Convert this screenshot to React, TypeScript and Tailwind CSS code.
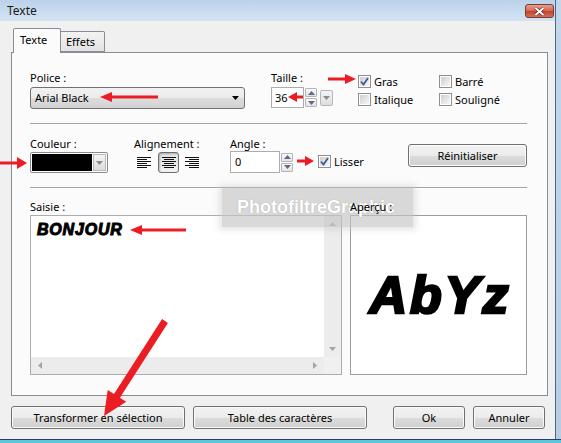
import React from "react";

type Pt = [number, number];

// red annotation arrows, screen coords: tail -> tip
const ARROWS: { tail: Pt; tip: Pt; w: number; len: number; half: number }[] = [
  { tail: [158, 97], tip: [100, 97], w: 3, len: 12, half: 5 },
  { tail: [303, 97], tip: [288, 97], w: 3, len: 9, half: 5 },
  { tail: [328, 79], tip: [356, 79], w: 3, len: 11, half: 5 },
  { tail: [0, 163], tip: [27, 163], w: 3, len: 10, half: 6 },
  { tail: [297, 161], tip: [314, 161], w: 3, len: 9, half: 5 },
  { tail: [186, 230], tip: [130, 230], w: 3, len: 12, half: 5 },
  { tail: [165, 321], tip: [104, 416], w: 7, len: 24, half: 11 },
];

function arrowPoints(tail: Pt, tip: Pt, w: number, len: number, half: number) {
  const dx = tip[0] - tail[0];
  const dy = tip[1] - tail[1];
  const l = Math.hypot(dx, dy);
  const ux = dx / l;
  const uy = dy / l;
  const nx = -uy;
  const ny = ux;
  const bx = tip[0] - ux * len;
  const by = tip[1] - uy * len;
  const pts: Pt[] = [
    [tail[0] + (nx * w) / 2, tail[1] + (ny * w) / 2],
    [bx + (nx * w) / 2, by + (ny * w) / 2],
    [bx + nx * half, by + ny * half],
    tip,
    [bx - nx * half, by - ny * half],
    [bx - (nx * w) / 2, by - (ny * w) / 2],
    [tail[0] - (nx * w) / 2, tail[1] - (ny * w) / 2],
  ];
  return pts.map((p) => p.map((v) => v.toFixed(1)).join(",")).join(" ");
}

const BTN =
  "h-[23px] rounded-[3px] border border-[#707070] bg-[linear-gradient(#f2f2f2_0%,#ebebeb_50%,#dddddd_50%,#cfcfcf_100%)] shadow-[inset_0_0_0_1px_#fbfbfb] flex items-center justify-center";

function Tri({ dir, color = "#4d4d4d" }: { dir: "up" | "down" | "left" | "right"; color?: string }) {
  const d = {
    up: "M0 4 L3.5 0 L7 4 Z",
    down: "M0 0 L7 0 L3.5 4 Z",
    left: "M4 0 L4 7 L0 3.5 Z",
    right: "M0 0 L4 3.5 L0 7 Z",
  }[dir];
  const vert = dir === "up" || dir === "down";
  return (
    <svg width={vert ? 7 : 4} height={vert ? 4 : 7} viewBox={vert ? "0 0 7 4" : "0 0 4 7"}>
      <path d={d} fill={color} />
    </svg>
  );
}

function Spin() {
  const half =
    "h-[9px] w-[12px] border border-[#b5b5b5] rounded-[1px] bg-[linear-gradient(#fafafa,#e4e4e4)] grid place-items-center";
  return (
    <div className="flex flex-col gap-px">
      <div className={half}>
        <Tri dir="up" color="#5b6b84" />
      </div>
      <div className={half}>
        <Tri dir="down" color="#5b6b84" />
      </div>
    </div>
  );
}

function Check({ checked, label }: { checked?: boolean; label: string }) {
  return (
    <div className="flex items-center gap-[3px] h-[13px]">
      <span className="w-[13px] h-[13px] border border-[#8e8f8f] p-px bg-white">
        <span className="w-full h-full grid place-items-center bg-[linear-gradient(135deg,#cfcfcf,#f7f7f7)]">
          {checked && (
            <svg width="9" height="9" viewBox="0 0 9 9">
              <path d="M1 4.5 L3.5 7.5 L8 1" stroke="#3d5a99" strokeWidth="1.8" fill="none" />
            </svg>
          )}
        </span>
      </span>
      <span>{label}</span>
    </div>
  );
}

function AlignIcon({ mode }: { mode: "left" | "center" | "right" }) {
  const widths = [14, 10, 14, 10, 14, 10];
  return (
    <svg width="14" height="11" viewBox="0 0 14 11">
      {widths.map((w, i) => {
        const x = mode === "left" ? 0 : mode === "center" ? (14 - w) / 2 : 14 - w;
        return <rect key={i} x={x} y={i * 2} width={w} height={1} fill="#111" />;
      })}
    </svg>
  );
}

function Sep() {
  return <div className="w-[497px] h-[2px] border-t border-[#a3a3a3] border-b border-b-white" />;
}

export default function App() {
  return (
    <div className="relative w-[561px] h-[443px] overflow-hidden flex flex-col font-['Noto_Sans',sans-serif] text-[11px] leading-[14px] text-black">
      <div className="flex flex-1">
        <div className="flex flex-col w-[555px]">
          {/* title bar */}
          <div className="h-[21px] flex items-start justify-between bg-[linear-gradient(#bcd2ea,#d3e3f4)]">
            <span className="pl-[7px] pt-[3px] text-[12px] leading-[16px] text-[#1a1a1a]">Texte</span>
            <div className="mt-[4px] mr-px w-[29px] h-[14px] rounded-[3px] border border-[#7a3b33] bg-[linear-gradient(#e6a191_0%,#d6634f_50%,#c2412c_51%,#d0705c_100%)] grid place-items-center">
              <svg width="11" height="9" viewBox="0 0 11 9">
                <path d="M1.5 1 L9.5 8 M9.5 1 L1.5 8" stroke="#5a1f18" strokeWidth="3.2" />
                <path d="M1.5 1 L9.5 8 M9.5 1 L1.5 8" stroke="#fff" strokeWidth="2" />
              </svg>
            </div>
          </div>

          {/* window body */}
          <div className="flex-1 bg-[#f0f0f0] pt-[7px] pl-[11px]">
            <div className="flex items-end ml-[2px]">
              <div className="relative z-10 -mb-px h-[25px] w-[48px] border border-b-0 border-[#898c95] rounded-t-[2px] bg-[#fbfbfb] pl-[6px] pt-[4px]">
                Texte
              </div>
              <div className="h-[21px] w-[44px] border border-l-0 border-[#898c95] rounded-tr-[2px] bg-[linear-gradient(#f3f3f3,#e3e3e3)] pl-[5px] pt-[3px]">
                Effets
              </div>
            </div>

            <div className="w-[537px] h-[344px] border border-[#898c95] bg-[#fbfbfb] pl-[18px] pt-[18px]">
              {/* font / size / style */}
              <div className="flex items-start">
                <div className="w-[215px]">
                  <div>Police :</div>
                  <div className="mt-[2px] h-[22px] rounded-[3px] border border-[#707070] bg-[linear-gradient(#f2f2f2_0%,#ebebeb_50%,#dddddd_50%,#d2d2d2_100%)] flex items-center justify-between pl-[4px] pr-[5px]">
                    <span>Arial Black</span>
                    <Tri dir="down" color="#000" />
                  </div>
                </div>
                <div className="ml-[26px]">
                  <div>Taille :</div>
                  <div className="mt-[2px] flex items-start">
                    <div className="w-[33px] h-[21px] border border-[#abadb3] bg-white pl-[3px] flex items-center">36</div>
                    <div className="ml-px mt-px">
                      <Spin />
                    </div>
                    <div className="ml-[3px] mt-[3px] w-[13px] h-[16px] border border-[#b8b8b8] rounded-[2px] bg-[linear-gradient(#f4f4f4,#dedede)] grid place-items-center">
                      <Tri dir="down" color="#8a8a8a" />
                    </div>
                  </div>
                </div>
                <div className="ml-[25px] mt-[4px] grid grid-cols-[81px_auto] gap-y-[5px]">
                  <Check checked label="Gras" />
                  <Check label="Barré" />
                  <Check label="Italique" />
                  <Check label="Souligné" />
                </div>
              </div>

              <div className="mt-[14px]">
                <Sep />
              </div>

              {/* colour / alignment / angle */}
              <div className="mt-[12px] flex items-start w-[497px]">
                <div className="w-[104px]">
                  <div>Couleur :</div>
                  <div className="mt-px w-[78px] h-[21px] border border-[#8a8a8a] rounded-[2px] bg-white p-px flex">
                    <div className="flex-1 bg-black" />
                    <div className="ml-px w-[13px] border border-[#b8b8b8] bg-[linear-gradient(#f4f4f4,#dcdcdc)] grid place-items-center">
                      <Tri dir="down" color="#8a8a8a" />
                    </div>
                  </div>
                </div>
                <div className="w-[96px]">
                  <div>Alignement :</div>
                  <div className="mt-px h-[21px] flex items-center">
                    <div className="ml-[3px]">
                      <AlignIcon mode="left" />
                    </div>
                    <div className="ml-[7px] w-[21px] h-[21px] rounded-[3px] border border-[#6f6f6f] bg-[linear-gradient(#e2e2e2,#f2f2f2)] shadow-[inset_1px_1px_2px_rgba(0,0,0,0.25)] grid place-items-center">
                      <AlignIcon mode="center" />
                    </div>
                    <div className="ml-[6px]">
                      <AlignIcon mode="right" />
                    </div>
                  </div>
                </div>
                <div>
                  <div>Angle :</div>
                  <div className="flex items-center">
                    <div className="w-[50px] h-[22px] border border-[#abadb3] bg-white pl-[4px] flex items-center">0</div>
                    <div className="ml-px">
                      <Spin />
                    </div>
                    <div className="ml-[25px] mt-[-1px]">
                      <Check checked label="Lisser" />
                    </div>
                  </div>
                </div>
                <div className={`${BTN} ml-auto mt-[7px] w-[119px] h-[22px]`}>Réinitialiser</div>
              </div>

              <div className="mt-[14px]">
                <Sep />
              </div>

              {/* input / preview */}
              <div className="mt-[11px] flex items-start">
                <div className="w-[312px]">
                  <div>Saisie :</div>
                  <div className="mt-px h-[160px] border border-[#abadb3] bg-white flex flex-col">
                    <div className="flex-1 flex">
                      <div className="flex-1 pl-[6px] pt-[6px]">
                        <span className="font-['Liberation_Sans',Arial,sans-serif] font-bold italic text-[16px] leading-[16px] tracking-[0.8px] [-webkit-text-stroke:1px_#000]">
                          BONJOUR
                        </span>
                      </div>
                      <div className="w-[17px] bg-[#ececec] flex flex-col items-center justify-between py-[6px]">
                        <Tri dir="up" color="#a3a3a3" />
                        <Tri dir="down" color="#a3a3a3" />
                      </div>
                    </div>
                    <div className="h-[17px] flex">
                      <div className="flex-1 bg-[#ececec] flex items-center justify-between px-[7px]">
                        <Tri dir="left" color="#a3a3a3" />
                        <Tri dir="right" color="#a3a3a3" />
                      </div>
                      <div className="w-[17px] bg-[#f0f0f0]" />
                    </div>
                  </div>
                </div>
                <div className="ml-[8px] w-[177px]">
                  <div className="relative z-30 w-fit">Aperçu :</div>
                  <div className="mt-px h-[160px] border border-[#9c9c9c] bg-white flex items-center justify-center pl-[4px]">
                    <span className="font-['Liberation_Sans',Arial,sans-serif] font-bold italic text-[52px] leading-none tracking-[3px] [-webkit-text-stroke:2.6px_#000]">
                      AbYz
                    </span>
                  </div>
                </div>
              </div>
            </div>

            {/* dialog buttons */}
            <div className="mt-[10px] flex">
              <div className={`${BTN} w-[174px]`}>Transformer en sélection</div>
              <div className={`${BTN} ml-[8px] w-[174px]`}>Table des caractères</div>
              <div className={`${BTN} ml-[26px] w-[72px]`}>Ok</div>
              <div className={`${BTN} ml-[8px] w-[72px]`}>Annuler</div>
            </div>
          </div>
        </div>
        <div className="w-px bg-[#4d6886]" />
        <div className="flex-1 bg-[linear-gradient(#c3d7ec,#b9cde2)]" />
      </div>
      <div className="h-px bg-[#26425e]" />
      <div className="h-[3px] bg-[#5fc4e0]" />

      {/* watermark */}
      <div className="absolute z-20 left-[222px] top-[188px] w-[191px] h-[39px] bg-[#c4c4c4]/65 shadow-[0_0_6px_3px_rgba(200,200,200,0.45)] pl-[15px] font-['Liberation_Sans',Arial,sans-serif] font-bold text-[18px] leading-[39px] text-white [text-shadow:0_0_1px_#9a9a9a]">
        PhotofiltreGraphic
      </div>

      {/* annotation arrows */}
      <svg className="absolute inset-0 z-40 pointer-events-none" width="561" height="443" viewBox="0 0 561 443">
        {ARROWS.map((a, i) => (
          <polygon key={i} points={arrowPoints(a.tail, a.tip, a.w, a.len, a.half)} fill="#ec1c24" />
        ))}
      </svg>
    </div>
  );
}
